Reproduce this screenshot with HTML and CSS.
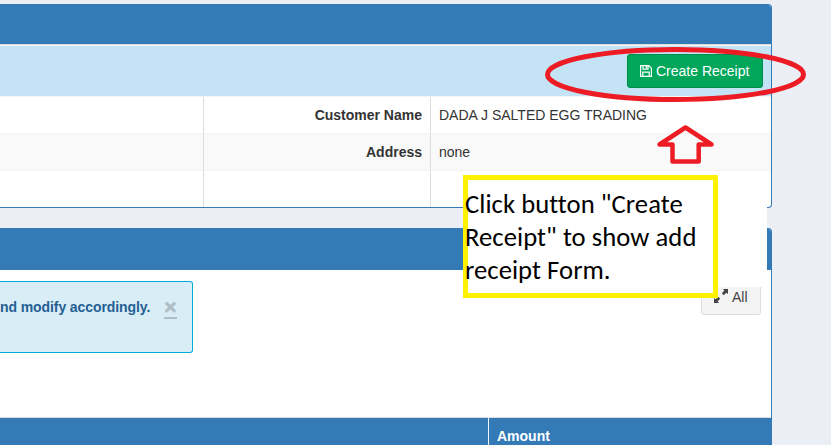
FILE: index.html
```html
<!DOCTYPE html>
<html lang="en">
<head>
<meta charset="utf-8">
<title>Receipt</title>
<link rel="stylesheet" href="styles.css">
</head>
<body>
<main class="page">
  <section class="panel customer">
    <header class="panel-head"></header>
    <div class="toolbar">
      <button class="btn btn-success">
        <svg class="icon" width="12" height="12" viewBox="0 0 12 12" fill="none" stroke="#fff" stroke-width="1.2"><path d="M.6.6H8.8L11.4 3.2V11.4H.6ZM3 .6V4.2H8V.6M2.8 11.4V7.2H9.2V11.4"/><path d="M6.4 1V3.2" stroke-width="1.3"/></svg>
        <span>Create Receipt</span>
      </button>
    </div>
    <div class="details">
      <div></div><div class="label">Customer Name</div><div>DADA J SALTED EGG TRADING</div>
      <div></div><div class="label">Address</div><div>none</div>
      <div></div><div></div><div></div>
    </div>
  </section>
  <section class="panel items">
    <header class="panel-head"></header>
    <div class="panel-body">
      <div class="alert"><b>nd modify accordingly.</b><span class="close">×</span></div>
      <button class="btn btn-default">
        <svg class="icon" width="14" height="14" viewBox="0 0 14 14" fill="#444"><path d="M9 0H14V5L12.300 3.700 9.800 6.200 7.800 4.200 10.300 1.700ZM0 9 1.700 10.300 4.200 7.800 6.200 9.800 3.700 12.300 5 14H0Z"/></svg>
        <span>All</span>
      </button>
    </div>
    <div class="table-head"><div></div><div>Amount</div></div>
  </section>
</main>
<div class="mask"></div>
<div class="callout"><p>Click button "Create<br>Receipt" to show add<br>receipt Form.</p></div>
<svg class="marks" width="831" height="445" viewBox="0 0 831 445" fill="none" stroke="#ed1c24">
  <ellipse cx="675.5" cy="74.500" rx="128" ry="25" stroke-width="5"/>
  <path d="M685.500 127.500 659.500 144.500H672.500V161.500H698.700V144.500H711.500Z" stroke-width="4.500" stroke-linejoin="round"/>
</svg>
</body>
</html>
```
FILE: styles.css
```css
* { box-sizing: border-box; }
body {
  margin: 0;
  width: 831px;
  height: 445px;
  overflow: hidden;
  position: relative;
  background: #ebeef4;
  color: #333;
  font: 14px/20px "Liberation Sans", Arial, sans-serif;
}
.page { width: 772px; padding-top: 4px; }
.panel {
  background: #fff;
  border: 1px solid #337ab7;
  border-left: 0;
  border-radius: 0 4px 4px 0;
  overflow: hidden;
}
.customer { height: 204px; margin-bottom: 20px; }
.items { height: 217px; border-bottom: 0; border-radius: 0 4px 0 0; }
.panel-head { height: 41px; background: #337ab7; }
.customer .panel-head { height: 39px; }
.toolbar {
  height: 53px;
  border-top: 1px solid #ddd;
  border-bottom: 1px solid #f4f4f4;
  box-shadow: inset 0 1px #f4f4f4;
  background: #c4e3f5;
  display: flex;
  justify-content: flex-end;
  padding: 9px 8px 0 0;
}
.btn {
  display: flex;
  align-items: center;
  height: 34px;
  padding: 0 12px;
  border: 1px solid #008d4c;
  border-radius: 3px;
  font: inherit;
  gap: 4px;
}
.btn-success { width: 136px; background: #00a65a; color: #fff; }
.btn-default { width: 60px; padding-bottom: 2px; background: #f4f4f4; border-color: #ddd; color: #444; }
.btn-default .icon { margin-top: -2px; }
.icon { flex: none; }
.details {
  display: grid;
  grid-template-columns: 203px 227px 1fr;
  grid-template-rows: 37px 37px 36px;
}
.details > div {
  padding: 8px;
  border-bottom: 1px solid #f4f4f4;
  border-left: 1px solid #ddd;
}
.details > div:nth-child(3n + 1) { border-left: 0; }
.details > div:nth-child(n + 4):nth-child(-n + 6) { background: #f9f9f9; }
.details > div:nth-child(n + 7) { border-bottom: 0; }
.details .label { text-align: right; font-weight: bold; }
.panel-body {
  height: 147px;
  padding: 11px 10px 0 0;
  display: flex;
  justify-content: space-between;
}
.alert {
  width: 193px;
  height: 72px;
  padding: 15px 15px 0 0;
  border: 1px solid #00acd6;
  border-left: 0;
  border-radius: 0 3px 3px 0;
  background: #d9edf7;
  color: #245f93;
  display: flex;
  justify-content: space-between;
}
.alert b { white-space: nowrap; letter-spacing: -.09px; }
.close {
  width: 13px;
  height: 22px;
  border-bottom: 2px solid #aebec6;
  color: #aebec6;
  font-size: 21px;
  font-weight: bold;
  text-align: center;
  -webkit-text-stroke: .7px #aebec6;
}
.table-head {
  height: 28px;
  border-top: 1px solid #ddd;
  background: #337ab7;
  color: #fff;
  font-weight: bold;
  display: grid;
  grid-template-columns: 488px 1fr;
}
.table-head > div + div { border-left: 1px solid #f4f4f4; padding: 8px 8px 0; }
.mask {
  position: absolute;
  left: 463px;
  top: 175px;
  width: 304px;
  height: 112px;
  background: #fff;
}
.callout {
  position: absolute;
  left: 463px;
  top: 175px;
  width: 255px;
  height: 123px;
  border: 5px solid #fff200;
  background: #fff;
}
.callout p {
  margin: 8px 0 0 -3px;
  color: #000;
  font: 26.67px/33px Carlito, Calibri, Lato, sans-serif;
  font-variant-ligatures: none;
  letter-spacing: .05px;
  white-space: nowrap;
}
.marks { position: absolute; left: 0; top: 0; }
```
